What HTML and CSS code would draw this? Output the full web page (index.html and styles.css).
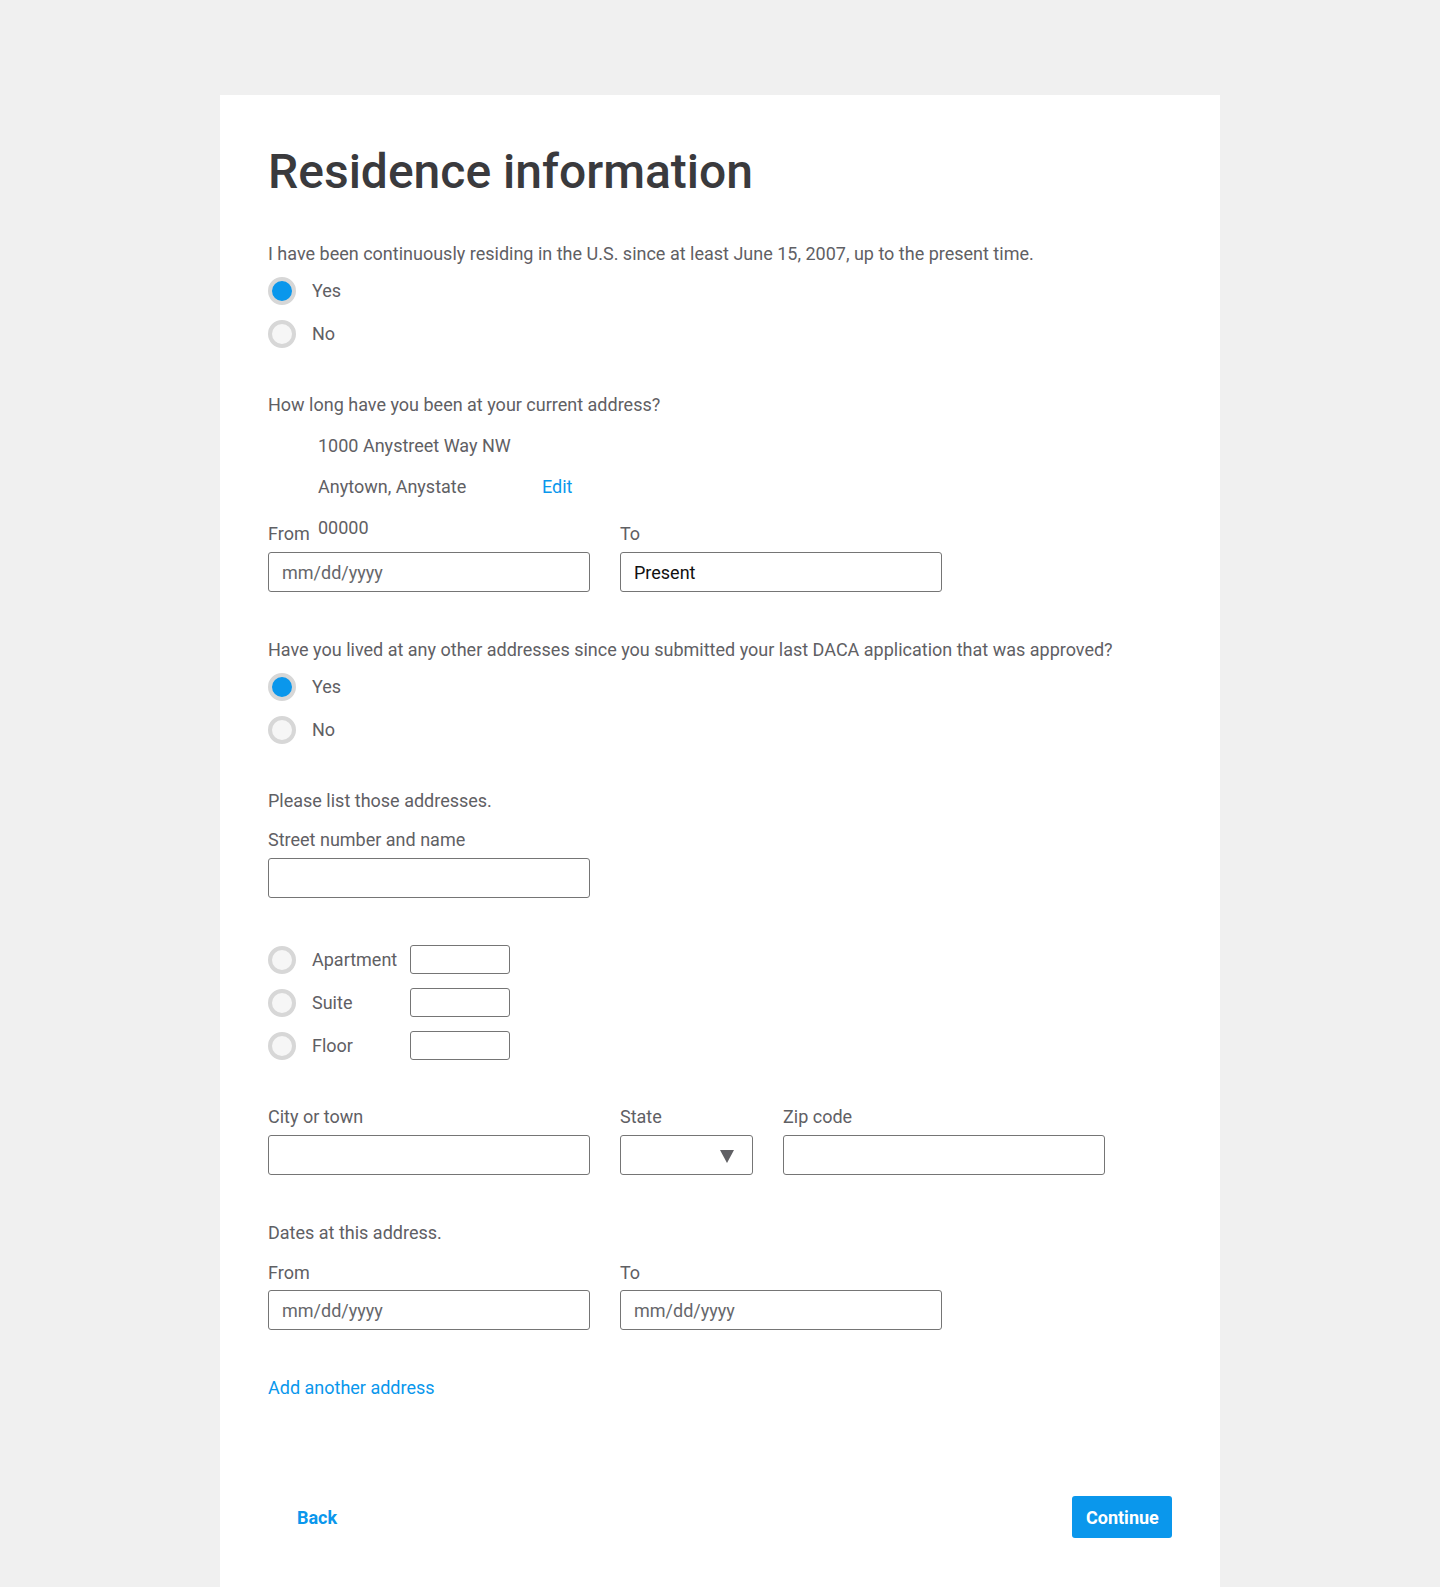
FILE: index.html
```html
<!DOCTYPE html>
<html lang="en">
<head>
<meta charset="utf-8">
<title>Residence information</title>
<link rel="stylesheet" href="styles.css">
</head>
<body>
<main class="card">
  <h1 class="title">Residence information</h1>

  <p class="question">I have been continuously residing in the U.S. since at least June 15, 2007, up to the present time.</p>
  <div class="radio-group">
    <label class="radio-row"><span class="radio checked"></span><span class="radio-label">Yes</span></label>
    <label class="radio-row"><span class="radio"></span><span class="radio-label">No</span></label>
  </div>

  <p class="question gap-lg">How long have you been at your current address?</p>
  <div class="address">
    <div class="addr-line">1000 Anystreet Way NW</div>
    <div class="addr-line"><span class="addr-city">Anytown, Anystate</span><a class="link" href="#">Edit</a></div>
    <div class="addr-line addr-zip">00000</div>
  </div>
  <div class="field-row">
    <div class="field">
      <div class="field-label">From</div>
      <div class="input placeholder">mm/dd/yyyy</div>
    </div>
    <div class="field">
      <div class="field-label">To</div>
      <div class="input filled">Present</div>
    </div>
  </div>

  <p class="question gap-xl">Have you lived at any other addresses since you submitted your last DACA application that was approved?</p>
  <div class="radio-group">
    <label class="radio-row"><span class="radio checked"></span><span class="radio-label">Yes</span></label>
    <label class="radio-row"><span class="radio"></span><span class="radio-label">No</span></label>
  </div>

  <p class="question gap-lg">Please list those addresses.</p>
  <div class="field-row gap-street">
    <div class="field">
      <div class="field-label">Street number and name</div>
      <div class="input"></div>
    </div>
  </div>

  <div class="unit-group">
    <label class="radio-row"><span class="radio"></span><span class="radio-label unit-label">Apartment</span><span class="input small"></span></label>
    <label class="radio-row"><span class="radio"></span><span class="radio-label unit-label">Suite</span><span class="input small"></span></label>
    <label class="radio-row"><span class="radio"></span><span class="radio-label unit-label">Floor</span><span class="input small"></span></label>
  </div>

  <div class="field-row gap-city">
    <div class="field">
      <div class="field-label">City or town</div>
      <div class="input"></div>
    </div>
    <div class="field field-state">
      <div class="field-label">State</div>
      <div class="input select"><span class="caret"></span></div>
    </div>
    <div class="field">
      <div class="field-label">Zip code</div>
      <div class="input"></div>
    </div>
  </div>

  <p class="question gap-xl">Dates at this address.</p>
  <div class="field-row gap-dates">
    <div class="field">
      <div class="field-label tight">From</div>
      <div class="input placeholder">mm/dd/yyyy</div>
    </div>
    <div class="field">
      <div class="field-label tight">To</div>
      <div class="input placeholder">mm/dd/yyyy</div>
    </div>
  </div>

  <a class="link add-link" href="#">Add another address</a>

  <div class="actions">
    <button class="btn btn-back" type="button">Back</button>
    <button class="btn btn-continue" type="button">Continue</button>
  </div>
</main>
</body>
</html>
```

FILE: styles.css
```css
* { box-sizing: border-box; }

html, body {
  margin: 0;
  padding: 0;
  background: #f0f0f0;
}

body {
  font-family: Roboto, "Liberation Sans", Arial, sans-serif;
  color: #5f6064;
  font-size: 18px;
}

.card {
  width: 1000px;
  margin: 95px auto 0;
  background: #ffffff;
  padding: 45px 48px 60px;
}

.title {
  margin: 0;
  font-size: 48px;
  line-height: 64px;
  font-weight: 500;
  color: #3a3a3d;
}

.question {
  margin: 38px 0 0;
  line-height: 24px;
  font-size: 18px;
}

.gap-lg { margin-top: 38px; }
.gap-xl { margin-top: 46px; }

.radio-group {
  margin-top: 3px;
  display: flex;
  flex-direction: column;
}

.radio-row {
  display: flex;
  align-items: center;
  height: 43px;
}

.radio {
  width: 28px;
  height: 28px;
  border-radius: 50%;
  border: 4.5px solid #d7d7d7;
  background: #f6f6f6;
  flex: none;
}

.radio.checked {
  background: #0a97ec;
}

.radio-label {
  margin-left: 16px;
  line-height: 24px;
}

.address {
  margin-top: 8px;
  margin-bottom: -26px;
  padding-left: 50px;
}

.addr-line {
  display: flex;
  line-height: 41px;
  height: 41px;
}

.addr-city {
  width: 224px;
}

.link {
  color: #0a97ec;
  text-decoration: none;
}

.field-row {
  display: flex;
  gap: 30px;
}

.gap-street { margin-top: 15px; }
.gap-city { margin-top: 38px; }
.gap-dates { margin-top: 16px; }

.field {
  display: flex;
  flex-direction: column;
  width: 322px;
}

.field-state { width: 133px; }

.field-label {
  line-height: 24px;
  margin-bottom: 6px;
}

.field-label.tight { margin-bottom: 5px; }

.input {
  height: 40px;
  border: 1px solid #757575;
  border-radius: 3px;
  background: #fff;
  padding: 0 13px;
  display: flex;
  align-items: center;
  font-size: 18px;
}

.input.placeholder { color: #66676b; }
.input.filled { color: #111; }

.input.select {
  justify-content: flex-end;
  padding-right: 18px;
}

.caret {
  width: 0;
  height: 0;
  border-left: 7px solid transparent;
  border-right: 7px solid transparent;
  border-top: 13px solid #606064;
  margin-top: 2px;
}

.unit-group {
  margin-top: 40px;
  display: flex;
  flex-direction: column;
}

.unit-label { width: 98px; }

.input.small {
  width: 100px;
  height: 29px;
}

.add-link {
  display: block;
  margin-top: 46px;
  line-height: 24px;
  width: max-content;
}

.actions {
  margin-top: 96px;
  display: flex;
  justify-content: space-between;
  align-items: center;
}

.btn {
  font-family: Roboto, "Liberation Sans", Arial, sans-serif;
  font-size: 18px;
  font-weight: 700;
  height: 42px;
  border: none;
  border-radius: 3px;
  padding: 0 14px;
  cursor: pointer;
}

.btn-back {
  background: transparent;
  color: #0a97ec;
  padding-left: 29px;
  padding-right: 29px;
}

.btn-continue {
  background: #0a97ec;
  color: #fff;
  width: 100px;
}
```
